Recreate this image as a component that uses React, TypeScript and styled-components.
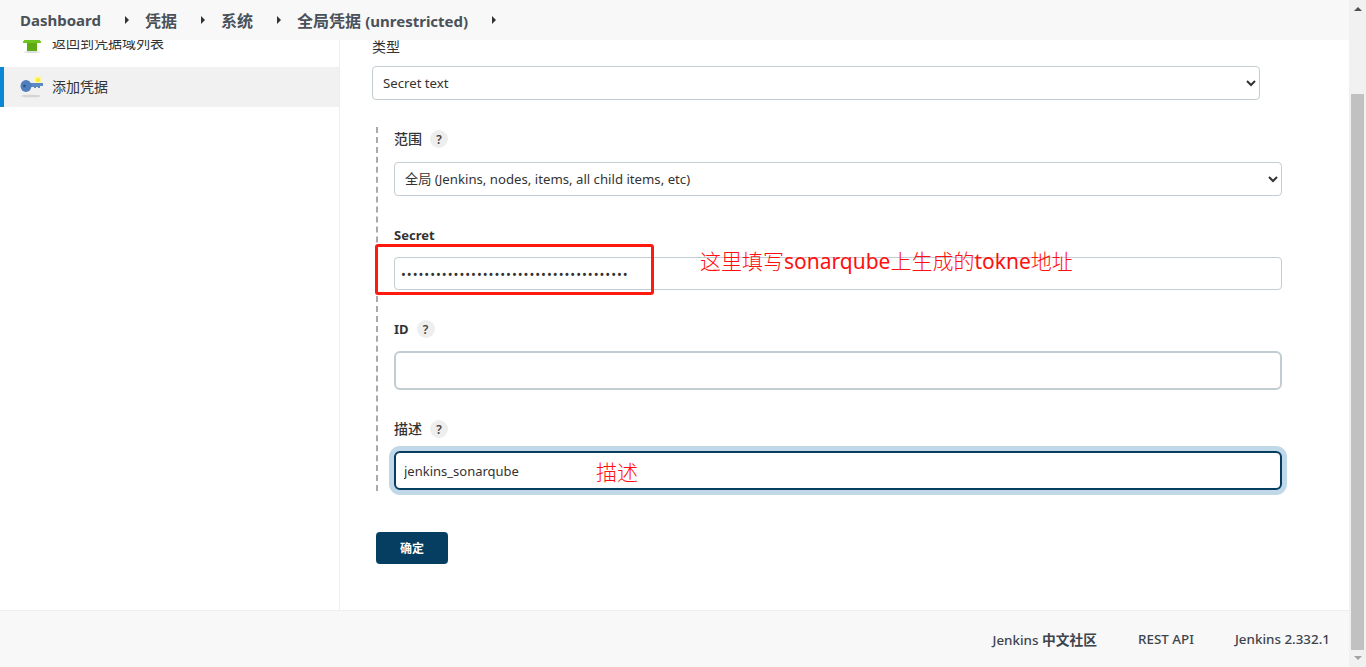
import styled, { createGlobalStyle } from "styled-components";

const GlobalStyle = createGlobalStyle`
  html, body {
    margin: 0;
    height: 100%;
    overflow: hidden;
  }
  body {
    font-family: "Noto Sans", "Noto Sans CJK SC", sans-serif;
    color: #333;
    background: #fff;
  }
`;

const Window = styled.div`
  display: flex;
  height: 667px;
`;

const Page = styled.div`
  flex: 1;
  min-width: 0;
  display: flex;
  flex-direction: column;
`;

const Header = styled.header`
  position: relative;
  z-index: 2;
  height: 40px;
  flex: none;
  display: flex;
  align-items: center;
  padding-left: 20px;
  background: #f8f8f8;
`;

const Crumb = styled.span`
  font-size: 16px;
  font-weight: 600;
  color: #4a5159;
  white-space: nowrap;
`;

const CrumbLatin = styled(Crumb)`
  font-size: 15px;
  font-weight: 700;
`;

const Caret = styled.span`
  flex: none;
  width: 0;
  height: 0;
  margin: 0 16px 0 24px;
  border-top: 4px solid transparent;
  border-bottom: 4px solid transparent;
  border-left: 4px solid #333;
`;

const Body = styled.div`
  flex: 1;
  min-height: 0;
  display: flex;
`;

const Sidebar = styled.nav`
  width: 339px;
  flex: none;
  border-right: 1px solid #eee;
`;

const SideList = styled.div`
  margin-top: -17px;
  display: flex;
  flex-direction: column;
  gap: 4px;
`;

const SideItem = styled.div<{ $active?: boolean }>`
  height: 40px;
  display: flex;
  align-items: center;
  gap: 8px;
  box-sizing: border-box;
  font-size: 14px;
  line-height: 38px;
  color: #333;
  background: ${(p) => (p.$active ? "#f1f1f1" : "transparent")};
  border-left: ${(p) => (p.$active ? "4px solid #0b87d6" : "0")};
  padding-left: ${(p) => (p.$active ? "16px" : "20px")};
`;

const Main = styled.main`
  position: relative;
  flex: 1;
  min-width: 0;
  margin-top: -3px;
  padding-left: 32px;
`;

const Label = styled.div`
  height: 20px;
  display: flex;
  align-items: center;
  font-size: 14px;
  font-weight: 500;
  color: #333;
`;

const LabelText = styled.span`
  position: relative;
  top: -1px;
`;

const PlainLabel = styled(Label)`
  font-weight: 400;
`;

const LatinLabel = styled(Label)`
  font-size: 13px;
  font-weight: 700;
`;

const Help = styled.span`
  width: 18px;
  height: 18px;
  margin-left: 8px;
  border-radius: 50%;
  background: #eee;
  display: flex;
  align-items: center;
  justify-content: center;
  font-size: 12px;
  font-weight: 600;
  color: #444;
`;

const Select = styled.select<{ $top: number }>`
  display: block;
  box-sizing: border-box;
  width: 888px;
  height: 34px;
  margin-top: ${(p) => p.$top}px;
  padding: 0 6px;
  font-family: inherit;
  font-size: 13.2px;
  color: #333;
  background: #fff;
  border: 1px solid #c3ccd1;
  border-radius: 4px;
  outline: none;
`;

const Block = styled.div`
  width: 906px;
  box-sizing: border-box;
  margin: 27px 0 0 4px;
  padding: 2px 0 1px 16px;
  border-left: 2px dashed #aaa;
`;

const Field = styled.div`
  margin-top: 29px;

  &:first-child {
    margin-top: 0;
  }
`;

const Input = styled.input<{ $height: number; $border: number; $focused?: boolean }>`
  display: block;
  box-sizing: border-box;
  width: 888px;
  height: ${(p) => p.$height}px;
  margin-top: 12px;
  padding: 0 ${(p) => 10 - p.$border}px;
  font-family: inherit;
  font-size: 13px;
  color: #333;
  background: #fff;
  border: ${(p) => p.$border}px solid ${(p) => (p.$focused ? "#053e60" : "#c3ccd1")};
  border-radius: ${(p) => (p.$border > 1 ? 6 : 4)}px;
  outline: none;
  box-shadow: ${(p) => (p.$focused ? "0 0 0 5px #c0d8e7" : "none")};
`;

const PasswordInput = styled(Input)`
  padding-left: 6px;
  letter-spacing: 0.95px;
`;

const SubmitButton = styled.button`
  display: block;
  width: 72px;
  height: 32px;
  margin: 41px 0 0 4px;
  padding: 0;
  border: 0;
  border-radius: 4px;
  background: #053e60;
  color: #fff;
  font-family: inherit;
  font-size: 12px;
  font-weight: 700;
`;

const MarkBox = styled.div`
  position: absolute;
  left: 35px;
  top: 207px;
  width: 279px;
  height: 51px;
  box-sizing: border-box;
  border: 3px solid #ff1a10;
  border-radius: 3px;
`;

const MarkText = styled.div<{ $left: number; $top: number }>`
  position: absolute;
  left: ${(p) => p.$left}px;
  top: ${(p) => p.$top}px;
  font-size: 21px;
  font-weight: 300;
  line-height: 28px;
  color: #ff0f0f;
  white-space: nowrap;
`;

const MarkLatin = styled.span`
  font-weight: 400;
`;

const Footer = styled.footer`
  height: 57px;
  flex: none;
  box-sizing: border-box;
  display: flex;
  align-items: center;
  justify-content: flex-end;
  gap: 41px;
  padding-right: 19px;
  border-top: 1px solid #eee;
  background: #f8f8f8;
  font-size: 13.4px;
  font-weight: 500;
  color: #3d444c;
`;

const FooterCjk = styled.span`
  font-size: 13.75px;
  font-weight: 700;
`;

const Scrollbar = styled.div`
  width: 17px;
  flex: none;
  display: flex;
  flex-direction: column;
  align-items: center;
  background: #f1f1f1;
`;

const ScrollUp = styled.span`
  width: 0;
  height: 0;
  margin-top: 7px;
  border-left: 4px solid transparent;
  border-right: 4px solid transparent;
  border-bottom: 4px solid #505050;
`;

const ScrollThumb = styled.div`
  width: 13px;
  height: 556px;
  margin-top: 83px;
  background: #c1c1c1;
`;

const ScrollDown = styled.span`
  width: 0;
  height: 0;
  margin-top: 6px;
  border-left: 4px solid transparent;
  border-right: 4px solid transparent;
  border-top: 4px solid #a3a3a3;
`;

const UpIcon = () => (
  <svg width="24" height="24" viewBox="0 0 24 24">
    <ellipse cx="12" cy="21" rx="8" ry="1.2" fill="#dcdcdc" />
    <path d="M12 1 L21 11 V12 H17 V20 H7 V12 H3 V11 Z" fill="#5cab12" />
    <path d="M12 1 L21 11 V12 H3 V11 Z" fill="#6fc31f" />
  </svg>
);

const KeyIcon = () => (
  <svg width="24" height="24" viewBox="0 0 24 24">
    <ellipse cx="11" cy="21" rx="10" ry="1.3" fill="#d4d4d4" />
    <circle cx="18" cy="5" r="4" fill="#fdf6a0" />
    <circle cx="18" cy="5" r="2" fill="#f4ea2c" />
    <path d="M10 8 H23 V11 H20 V13 H18 V12 H16 V13 H14 V12 H10 Z" fill="#5b88c6" />
    <ellipse cx="6" cy="11" rx="5.5" ry="6" fill="#4f7dbd" />
    <circle cx="4.5" cy="11" r="1.3" fill="#2c4f86" />
  </svg>
);

const App = () => (
  <Window>
    <GlobalStyle />
    <Page>
      <Header>
        <CrumbLatin>Dashboard</CrumbLatin>
        <Caret />
        <Crumb>凭据</Crumb>
        <Caret />
        <Crumb>系统</Crumb>
        <Caret />
        <Crumb>
          全局凭据 <CrumbLatin>(unrestricted)</CrumbLatin>
        </Crumb>
        <Caret />
      </Header>
      <Body>
        <Sidebar>
          <SideList>
            <SideItem>
              <UpIcon />
              返回到凭据域列表
            </SideItem>
            <SideItem $active>
              <KeyIcon />
              添加凭据
            </SideItem>
          </SideList>
        </Sidebar>
        <Main>
          <PlainLabel>
            <LabelText>类型</LabelText>
          </PlainLabel>
          <Select $top={9} defaultValue="secret">
            <option value="secret">Secret text</option>
          </Select>
          <Block>
            <Field>
              <Label>
                <LabelText>范围</LabelText>
                <Help>?</Help>
              </Label>
              <Select $top={13} defaultValue="global">
                <option value="global">全局 (Jenkins, nodes, items, all child items, etc)</option>
              </Select>
            </Field>
            <Field>
              <LatinLabel>Secret</LatinLabel>
              <PasswordInput
                type="password"
                $height={33}
                $border={1}
                defaultValue="000000000000000000000000000000000000000"
              />
            </Field>
            <Field>
              <LatinLabel>
                ID
                <Help>?</Help>
              </LatinLabel>
              <Input type="text" $height={39} $border={2} />
            </Field>
            <Field>
              <Label>
                <LabelText>描述</LabelText>
                <Help>?</Help>
              </Label>
              <Input type="text" $height={39} $border={2} $focused defaultValue="jenkins_sonarqube" />
            </Field>
          </Block>
          <SubmitButton>确定</SubmitButton>
          <MarkBox />
          <MarkText $left={360} $top={210}>
            这里填写<MarkLatin>sonarqube</MarkLatin>上生成的<MarkLatin>tokne</MarkLatin>地址
          </MarkText>
          <MarkText $left={256} $top={421}>描述</MarkText>
        </Main>
      </Body>
      <Footer>
        <span>
          Jenkins <FooterCjk>中文社区</FooterCjk>
        </span>
        <span>REST API</span>
        <span>Jenkins 2.332.1</span>
      </Footer>
    </Page>
    <Scrollbar>
      <ScrollUp />
      <ScrollThumb />
      <ScrollDown />
    </Scrollbar>
  </Window>
);

export default App;
